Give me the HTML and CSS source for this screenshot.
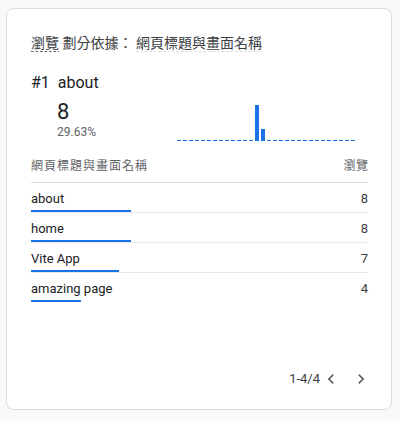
FILE: index.html
```html
<!DOCTYPE html>
<html lang="zh-Hant">
<head>
<meta charset="utf-8">
<link rel="stylesheet" href="styles.css">
</head>
<body>
<div class="card">
  <div class="title">
    <span class="metric">瀏覽</span> 劃分依據： <span class="dim">網頁標題與畫面名稱</span>
  </div>
  <div class="top-name">#1&nbsp; about</div>
  <div class="stats">
    <div class="value">
      <div class="big">8</div>
      <div class="pct">29.63%</div>
    </div>
    <div class="chart">
      <i></i><i></i><i></i><i></i><i></i><i></i><i></i><i></i><i></i><i></i>
      <i></i><i></i><i></i><i class="b" style="height:36px"></i><i class="b" style="height:12px"></i><i></i><i></i><i></i><i></i><i></i>
      <i></i><i></i><i></i><i></i><i></i><i></i><i></i><i></i><i></i><i></i>
    </div>
  </div>
  <div class="table">
    <div class="thead">
      <span class="th-label">網頁標題與畫面名稱</span>
      <span class="th-val">瀏覽</span>
    </div>
    <div class="row">
      <div class="cell">
        <div class="label">about</div>
        <div class="bar" style="width:100px"></div>
      </div>
      <div class="num">8</div>
    </div>
    <div class="row">
      <div class="cell">
        <div class="label">home</div>
        <div class="bar" style="width:100px"></div>
      </div>
      <div class="num">8</div>
    </div>
    <div class="row">
      <div class="cell">
        <div class="label">Vite App</div>
        <div class="bar" style="width:87.5px"></div>
      </div>
      <div class="num">7</div>
    </div>
    <div class="row last">
      <div class="cell">
        <div class="label">amazing page</div>
        <div class="bar" style="width:50px"></div>
      </div>
      <div class="num">4</div>
    </div>
  </div>
  <div class="pager">
    <span class="range">1-4/4</span>
    <span class="icon prev"><svg viewBox="0 0 24 24" width="20" height="20"><path d="M15.41 7.41L14 6l-6 6 6 6 1.41-1.41L10.83 12z" fill="#5f6368"/></svg></span>
    <span class="icon next"><svg viewBox="0 0 24 24" width="20" height="20"><path d="M10 6L8.59 7.41 13.17 12l-4.58 4.59L10 18l6-6z" fill="#5f6368"/></svg></span>
  </div>
</div>
</body>
</html>
```

FILE: styles.css
```css
html, body {
  margin: 0;
  padding: 0;
  background: #f8f9fa;
}
body {
  padding: 8px 0 0 6px;
  font-family: Roboto, "Noto Sans CJK TC", sans-serif;
  color: #202124;
}
.card {
  box-sizing: border-box;
  width: 386px;
  height: 402px;
  background: #fff;
  border: 1px solid #dadce0;
  border-radius: 8px;
  padding: 26px 23px 0 24px;
  display: flex;
  flex-direction: column;
}
.title {
  font-size: 14px;
  line-height: 16px;
  color: #3c4043;
  white-space: nowrap;
}
.metric, .dim {
  display: inline-block;
  background-repeat: repeat-x;
  background-position: 0 100%;
  background-size: 4.5px 1px;
  padding-bottom: 1px;
}
.metric {
  background-image: linear-gradient(to right, #5f6368 0 3px, transparent 3px);
}
.dim {
  background-image: linear-gradient(to right, #dadce0 0 3px, transparent 3px);
}
.top-name {
  margin-top: 21px;
  font-size: 16px;
  line-height: 20px;
  color: #202124;
}
.stats {
  display: flex;
  align-items: flex-start;
  margin-top: 6px;
}
.value {
  width: 120px;
  padding-left: 26px;
}
.big {
  font-size: 22px;
  line-height: 26px;
  color: #202124;
}
.pct {
  font-size: 12px;
  line-height: 14px;
  color: #5f6368;
}
.chart {
  height: 42px;
  display: flex;
  align-items: flex-end;
  gap: 2px;
}
.chart i {
  display: block;
  width: 4px;
  height: 1px;
  background: #1a73e8;
}
.table {
  margin-top: 17px;
}
.thead {
  display: flex;
  justify-content: space-between;
  font-size: 12px;
  line-height: 16px;
  letter-spacing: 1px;
  color: #5f6368;
  padding-bottom: 8px;
  border-bottom: 1px solid #dadce0;
}
.th-val {
  letter-spacing: 0.5px;
  margin-right: -0.5px;
}
.row {
  display: flex;
  justify-content: space-between;
  align-items: flex-start;
  border-bottom: 1px solid #e8eaed;
}
.row.last {
  border-bottom: none;
}
.cell {
  padding-top: 8px;
}
.label {
  font-size: 13px;
  line-height: 16px;
  color: #202124;
}
.bar {
  height: 2px;
  margin-top: 3px;
  background: #1a73e8;
}
.num {
  padding-top: 8px;
  font-size: 13px;
  line-height: 16px;
  color: #3c4043;
}
.pager {
  margin-top: auto;
  margin-bottom: 20px;
  margin-right: -3px;
  display: flex;
  justify-content: flex-end;
  align-items: center;
  height: 20px;
}
.range {
  font-size: 13px;
  line-height: 20px;
  color: #3c4043;
}
.icon {
  display: block;
  width: 20px;
  height: 20px;
}
.prev {
  margin-left: 1px;
}
.next {
  margin-left: 10px;
}
```
